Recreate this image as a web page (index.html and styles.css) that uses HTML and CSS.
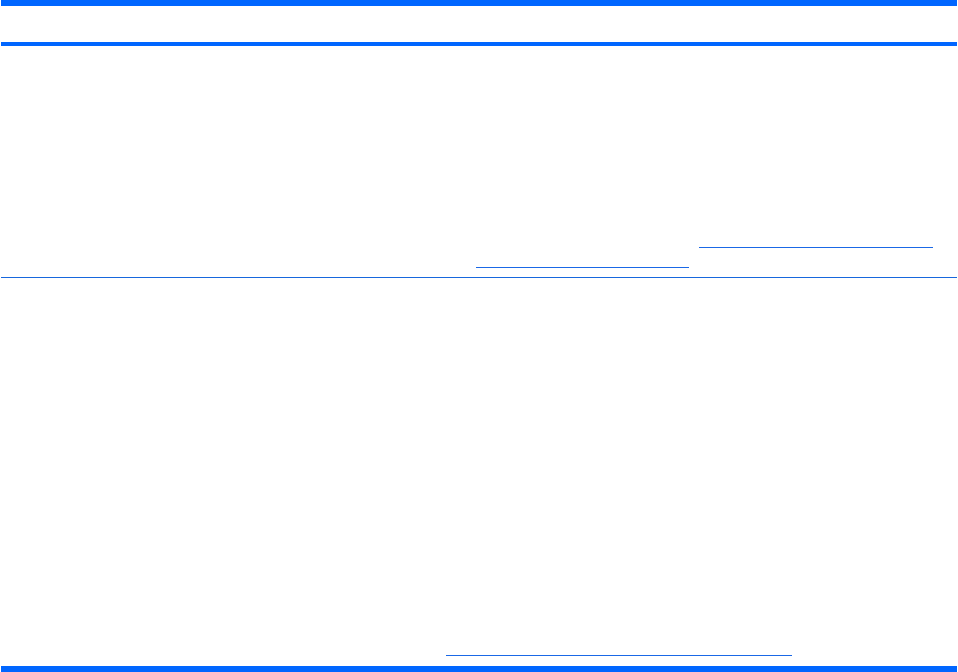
FILE: index.html
```html
<!DOCTYPE html>
<html lang="en">
<head>
<meta charset="utf-8">
<title>Table</title>
<link rel="stylesheet" href="styles.css">
</head>
<body>
<div class="page">
  <div class="bar bar-top"></div>
  <div class="bar bar-head"></div>
  <div class="row row-first">
    <div class="link-line line-a"></div>
    <div class="link-line line-b"></div>
  </div>
  <div class="row row-second">
    <div class="link-line line-c"></div>
  </div>
  <div class="bar bar-bottom"></div>
</div>
</body>
</html>
```
FILE: styles.css
```css
html, body {
  margin: 0;
  padding: 0;
  background: #ffffff;
  font-family: "Liberation Sans", Arial, sans-serif;
}
.page {
  width: 956px;
  margin-left: 1px;
  display: flex;
  flex-direction: column;
}
.bar {
  background: #0066ff;
}
.bar-top {
  height: 6px;
}
.bar-head {
  height: 4px;
  margin-top: 36px;
}
.row {
  display: flex;
  flex-direction: column;
}
.row-first {
  padding-top: 201px;
  padding-bottom: 9px;
  border-bottom: 1px solid #1767dd;
}
.link-line {
  height: 1px;
  background: #1a68e6;
}
.line-a {
  margin-left: 698px;
  width: 234px;
}
.line-b {
  margin-top: 19px;
  margin-left: 475px;
  width: 213px;
}
.row-second {
  padding-top: 377px;
}
.line-c {
  margin-left: 445px;
  width: 346px;
}
.bar-bottom {
  height: 6px;
  margin-top: 10px;
}
```
